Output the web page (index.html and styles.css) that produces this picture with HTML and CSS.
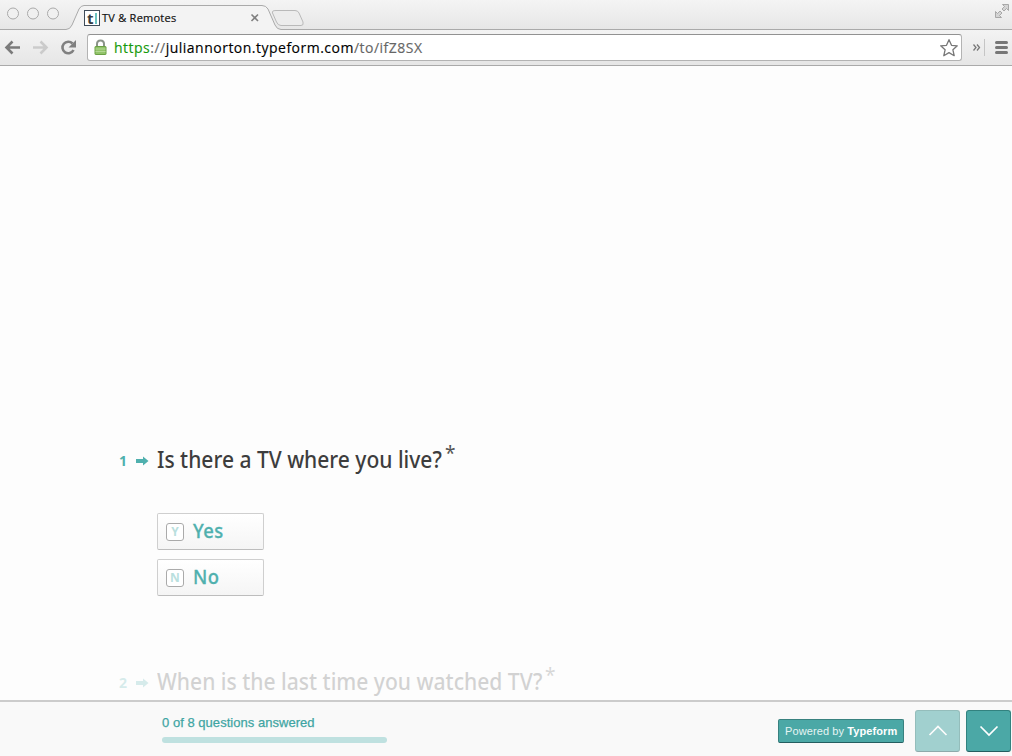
FILE: index.html
```html
<!DOCTYPE html>
<html lang="en">
<head>
<meta charset="utf-8">
<title>TV &amp; Remotes</title>
<link rel="stylesheet" href="styles.css">
</head>
<body>
<div class="window">
  <header class="titlebar">
    <svg class="titlebar-art" width="1012" height="30" viewBox="0 0 1012 30" fill="none">
      <g stroke="#aaa" fill="#f0f0f0"><circle cx="13" cy="13.500" r="5.500"/><circle cx="33" cy="13.500" r="5.500"/><circle cx="53" cy="13.500" r="5.500"/></g>
      <path d="M0 29.500H66Q70 29.500 72 25L79 9Q81 5.500 84 5.500H262Q266 5.500 268 9L275 25Q277 29.500 281 29.500H1012V31H0Z" fill="#f3f3f3" stroke="#aaa"/>
      <path d="M276 10.500H295Q298 10.500 299 13L303 22Q304 25.500 301 25.500H281Q278 25.500 276.500 22L272.500 13Q271.500 10.500 276 10.500Z" fill="#ececec" stroke="#b9b9b9"/>
      <path d="M251.500 14.500l6.500 6.500m0-6.500l-6.500 6.500" stroke="#808080" stroke-width="1.600"/>
      <path d="M1002.500 4.500h6v6l-2-2-2.500 2.500-2-2 2.500-2.500zM995.500 11.500l2 2 2.500-2.500 2 2-2.500 2.500 2 2h-6z" fill="#d4d4d4" stroke="#999" stroke-width=".8"/>
    </svg>
    <div class="tab"><span class="favicon">t<i></i></span><span class="tab-title">TV &amp; Remotes</span></div>
  </header>
  <nav class="toolbar">
    <svg class="nav-icons" width="87" height="36" viewBox="0 29 87 36" fill="none" stroke-width="2.600">
      <path d="M20 46.500H7M12.500 40.500L6.500 46.500L12.500 52.500" stroke="#7b7b7b"/>
      <path d="M33 46.500H46M40.500 40.500L46.500 46.500L40.500 52.500" stroke="#cbcbcb"/>
      <path d="M72.500 42.500A5.800 5.800 0 1 0 73.500 49" stroke="#808080"/><path d="M76 39V46.500H68.500Z" fill="#808080"/>
    </svg>
    <div class="address">
      <svg class="lock" width="13" height="17" viewBox="0 0 13 17" fill="none"><path d="M3 8V5Q3 1.500 6.500 1.500T10 5V8" stroke="#8b9489" stroke-width="2"/><rect x="1" y="7.500" width="11" height="8" rx=".5" fill="#92c46a" stroke="#6ba045"/><path d="M1.500 10h10m-10 2.500h10" stroke="#b4d894"/></svg>
      <span class="url"><b>https</b>://<strong>juliannorton.typeform.com</strong>/to/ifZ8SX</span>
      <svg class="star" width="20" height="20" viewBox="0 0 20 20"><path d="M10 1.700L12.500 7.300L18.300 7.800L13.900 11.800L15.200 17.700L10 14.600L4.800 17.700L6.100 11.800L1.700 7.800L7.500 7.300Z" fill="#fff" stroke="#777" stroke-width="1.300" stroke-linejoin="round"/></svg>
    </div>
    <svg width="50" height="36" viewBox="962 30 50 36" fill="none"><path d="M973.500 44.500l2.500 3-2.500 3m3.500-6l2.500 3-2.500 3" stroke="#777" stroke-width="1.300"/><path d="M984.500 39V56" stroke="#c5c5c5"/><path d="M996.500 42.500h10m-10 5h10m-10 5h10" stroke="#777" stroke-width="3" stroke-linecap="round"/></svg>
  </nav>
  <main class="form">
    <section class="question">
      <span class="number">1</span>
      <svg class="arrow" width="13" height="10" viewBox="0 0 13 10"><path d="M0 3H7V.5L12.500 5L7 9.500V7H0Z" fill="#4fb0ae"/></svg>
      <h1 class="prompt prompt-one">Is there a TV where you live?</h1><sup class="required">*</sup>
    </section>
    <div class="choices">
      <button class="choice"><kbd class="key">Y</kbd><span class="choice-text">Yes</span></button>
      <button class="choice"><kbd class="key">N</kbd><span class="choice-text">No</span></button>
    </div>
    <section class="question upcoming">
      <span class="number">2</span>
      <svg class="arrow" width="13" height="10" viewBox="0 0 13 10"><path d="M0 3H7V.5L12.500 5L7 9.500V7H0Z" fill="#4fb0ae"/></svg>
      <h2 class="prompt prompt-two">When is the last time you watched TV?</h2><sup class="required">*</sup>
    </section>
  </main>
  <footer class="footer">
    <div class="progress"><span class="progress-text">0 of 8 questions answered</span><div class="progress-bar"></div></div>
    <a class="powered"><span>Powered by</span> <b>Typeform</b></a>
    <button class="step step-disabled"><svg width="20" height="14" viewBox="0 0 20 14"><path d="M1.500 11L10 2.500L18.500 11" fill="none" stroke="#fff" stroke-width="1.700"/></svg></button>
    <button class="step"><svg width="20" height="14" viewBox="0 0 20 14"><path d="M1.500 2.500L10 11L18.500 2.500" fill="none" stroke="#fff" stroke-width="1.700"/></svg></button>
  </footer>
</div>
</body>
</html>
```
FILE: styles.css
```css
* { box-sizing: border-box; }
body { margin: 0; background: #fdfdfd; font-family: "Open Sans", sans-serif; overflow: hidden; }
button { font: inherit; padding: 0; margin: 0; }
.window { width: 1012px; height: 756px; display: flex; flex-direction: column; }
.titlebar { height: 30px; flex: none; position: relative; background: linear-gradient(#f4f4f4, #e6e6e6); }
.titlebar-art { position: absolute; left: 0; top: 0; }
.tab { position: relative; display: flex; align-items: center; padding: 10px 0 0 84px; }
.favicon { width: 16px; height: 16px; border: 1px solid #3f4c59; background: #fff; font: bold 15px/12px "Open Sans", sans-serif; color: #333b43; padding-left: 2px; display: flex; align-items: center; }
.favicon i { width: 2px; height: 11px; margin-left: 1px; background: #6cc3bf; flex: none; }
.tab-title { font: 11px/16px "Open Sans", sans-serif; color: #111; margin-left: 2px; white-space: nowrap; letter-spacing: .25px; -webkit-text-stroke: .2px; }
.toolbar { height: 36px; flex: none; display: flex; background: linear-gradient(#f3f3f3, #e6e6e6); border-bottom: 1px solid #aaa; }
.nav-icons { flex: none; }
.address { width: 875px; height: 27px; margin-top: 4px; flex: none; display: flex; align-items: center; border: 1px solid #b3b3b3; border-top-color: #929292; border-radius: 3px; background: #fff; padding: 0 2px 0 6px; }
.url { margin-left: 7px; color: #666; font-size: 14px; line-height: 20px; letter-spacing: .49px; white-space: nowrap; -webkit-text-stroke: .15px; }
.url b { font-weight: 400; color: #159a0c; }
.url strong { font-weight: 400; color: #000; }
.star { margin-left: auto; }
.form { flex: 1; min-height: 0; padding: 377px 0 0 119px; overflow: hidden; }
.question { display: flex; align-items: center; height: 34px; }
.number { font-size: 14px; font-weight: 700; color: #4fb0ae; width: 17px; flex: none; }
.arrow { width: 13px; margin-right: 8px; margin-top: 2px; flex: none; }
.prompt { margin: -2px 0 0; font: 500 23px/34px "Noto Sans", sans-serif; color: #3d3d3d; white-space: nowrap; transform-origin: left; flex: none; }
.prompt-one { width: 288px; transform: scaleX(.914); }
.prompt-two { width: 388px; transform: scaleX(.916); }
.required { font: 19px/20px "Noto Sans", sans-serif; color: #555; align-self: flex-start; }
.choices { padding: 36px 0 0 38px; display: grid; gap: 9px; }
.choice { width: 107px; height: 37px; border: 1px solid #cfcfcf; border-bottom-color: #bdbdbd; border-radius: 2px; background: linear-gradient(#fff, #f5f5f5); display: flex; align-items: center; padding-left: 8px; }
.key { width: 18px; height: 18px; border: 1px solid #aaa; border-radius: 3px; font: bold 12px/16px "Open Sans", sans-serif; text-align: center; color: #b9e0de; background: #fff; }
.choice-text { margin: -2px 0 0 9px; font: 500 20px/35px "Noto Sans", sans-serif; letter-spacing: .5px; color: #4fb0ae; -webkit-text-stroke: .3px; transform: scaleX(.92); transform-origin: left; }
.upcoming { margin-top: 69px; opacity: .22; }
.footer { height: 56px; flex: none; border-top: 2px solid #ccc; background: #f9f9f9; display: flex; align-items: flex-start; padding-left: 162px; }
.progress { width: 225px; padding-top: 13px; }
.progress-text { display: block; font: 13px/16px "Liberation Sans", sans-serif; color: #3fa5a3; -webkit-text-stroke: .25px; letter-spacing: .03px; white-space: nowrap; }
.progress-bar { height: 6px; margin-top: 6px; border-radius: 3px; background: #bfe1e0; }
.powered { width: 126px; height: 24px; margin: 17px 11px 0 391px; border: 1px solid #38817f; border-bottom-color: #245e60; border-radius: 2px; background: #4ba8a6; color: #e6f5f4; font: 11px/23px "Liberation Sans", sans-serif; padding-left: 6px; white-space: nowrap; letter-spacing: .1px; }
.powered b { color: #fff; }
.step { width: 45px; height: 42px; margin: 8px 6px 0 0; flex: none; border: 1px solid #32827f; border-bottom-color: #245e60; border-radius: 3px; background: #4ba8a6; display: grid; place-items: center; }
.step:last-child { margin-right: 0; }
.step-disabled { opacity: .5; }
```
